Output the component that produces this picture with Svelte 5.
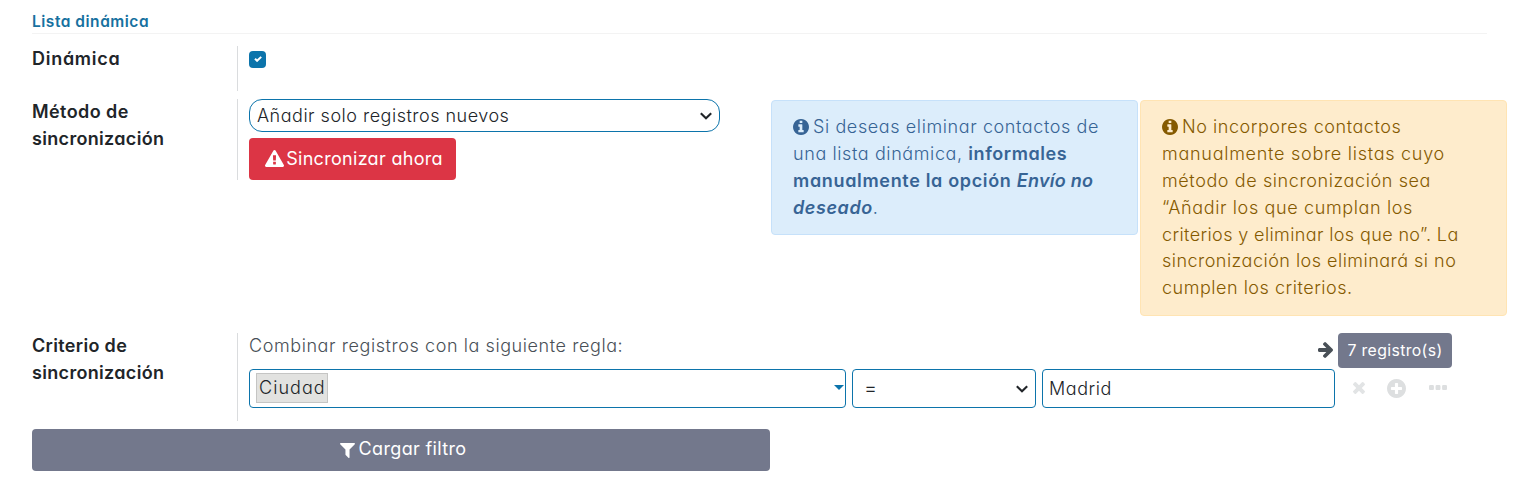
<script>
  const icons = {
    info: {
      box: '128 128 1536 1536',
      d: 'M1152 1376v-160q0-14-9-23t-23-9h-96v-512q0-14-9-23t-23-9h-320q-14 0-23 9t-9 23v160q0 14 9 23t23 9h96v320h-96q-14 0-23 9t-9 23v160q0 14 9 23t23 9h448q14 0 23-9t9-23zm-128-896v-160q0-14-9-23t-23-9h-192q-14 0-23 9t-9 23v160q0 14 9 23t23 9h192q14 0 23-9t9-23zM1664 896q0 209-103 385.5t-279.5 279.5-385.5 103-385.5-103-279.5-279.5-103-385.5 103-385.5 279.5-279.5 385.5-103 385.5 103 279.5 279.5 103 385.5z'
    },
    warning: {
      box: '0 0 1792 1664',
      d: 'M1024 1375v-190q0-14-9.500-23.500t-22.500-9.500h-192q-13 0-22.500 9.500t-9.500 23.500v190q0 14 9.500 23.500t22.500 9.500h192q13 0 22.500-9.500t9.500-23.500zm-2-374l18-459q0-12-10-19-13-11-24-11h-220q-11 0-24 11-10 7-10 21l17 457q0 10 10 16.500t24 6.500h185q14 0 23.500-6.500t10.500-16.500zm-14-934l768 1408q35 63-2 126-17 29-46.500 46t-63.500 17h-1536q-34 0-63.500-17t-46.500-46q-37-63-2-126l768-1408q17-31 47-49t65-18 65 18 47 49z'
    },
    filter: {
      box: '192 256 1408 1408',
      d: 'M1595 295q17 41-14 70l-493 493v742q0 42-39 59-13 5-25 5-27 0-45-19l-256-256q-19-19-19-45v-486l-493-493q-31-29-14-70 17-39 59-39h1280q42 0 59 39z'
    },
    arrow: {
      box: '128 180 1472 1560',
      d: 'M1600 960q0 54-37 91l-651 651q-39 37-91 37-51 0-90-37l-75-75q-38-38-38-91t38-91l293-293h-704q-52 0-84.500-37.500t-32.500-90.500v-128q0-53 32.500-90.500t84.500-37.500h704l-293-294q-38-36-38-90t38-90l75-75q38-38 90-38 53 0 91 38l651 651q37 35 37 90z'
    },
    times: {
      box: '302 366 1188 1188',
      d: 'M1490 1322q0 40-28 68l-136 136q-28 28-68 28t-68-28l-294-294-294 294q-28 28-68 28t-68-28l-136-136q-28-28-28-68t28-68l294-294-294-294q-28-28-28-68t28-68l136-136q28-28 68-28t68 28l294 294 294-294q28-28 68-28t68 28l136 136q28 28 28 68t-28 68l-294 294 294 294q28 28 28 68z'
    },
    plus: {
      box: '128 128 1536 1536',
      d: 'M1344 960v-128q0-26-19-45t-45-19h-256v-256q0-26-19-45t-45-19h-128q-26 0-45 19t-19 45v256h-256q-26 0-45 19t-19 45v128q0 26 19 45t45 19h256v256q0 26 19 45t45 19h128q26 0 45-19t19-45v-256h256q26 0 45-19t19-45zM1664 896q0 209-103 385.500t-279.500 279.500-385.500 103-385.500-103-279.500-279.500-103-385.500 103-385.500 279.500-279.500 385.500-103 385.500 103 279.500 279.500 103 385.500z'
    },
    dots: {
      box: '192 640 1408 384',
      d: 'M576 736v192q0 40-28 68t-68 28h-192q-40 0-68-28t-28-68v-192q0-40 28-68t68-28h192q40 0 68 28t28 68zm512 0v192q0 40-28 68t-68 28h-192q-40 0-68-28t-28-68v-192q0-40 28-68t68-28h192q40 0 68 28t28 68zm512 0v192q0 40-28 68t-68 28h-192q-40 0-68-28t-28-68v-192q0-40 28-68t68-28h192q40 0 68 28t28 68z'
    }
  };

  // Each line is a list of runs: text, letter spacing in px, style class.
  const syncNote = [
    [['Si deseas eliminar contactos de', 0.6, '']],
    [['una lista dinámica, ', 0.6, ''], ['informales', 0.55, 'strong']],
    [['manualmente la opción ', 0.67, 'strong'], ['Envío no', 0.25, 'strong em']],
    [['deseado', 0.6, 'strong em'], ['.', 0, '']]
  ];
  const manualNote = [
    [['No incorpores contactos', 0.55, '']],
    [['manualmente sobre listas cuyo', 0.73, '']],
    [['método de sincronización sea', 0.6, '']],
    [['“Añadir los que cumplan los', 0.63, '']],
    [['criterios y eliminar los que no”. La', 0.38, '']],
    [['sincronización los eliminará si no', 0.48, '']],
    [['cumplen los criterios.', 0.52, '']]
  ];
</script>

{#snippet icon(name)}
  <svg class="icon {name}" viewBox={icons[name].box} preserveAspectRatio="none" aria-hidden="true"><path fill="currentColor" fill-rule="evenodd" d={icons[name].d} /></svg>
{/snippet}

{#snippet chevron()}
  <svg class="chevron" viewBox="0 0 12 8" aria-hidden="true"><path d="M0.800 1.200 L6 6.200 L11.200 1.200" fill="none" stroke="#212529" stroke-width="2.100" /></svg>
{/snippet}

{#snippet run(text, spacing, cls = '')}<span class={cls} style:letter-spacing="{spacing}px">{text}</span>{/snippet}

{#snippet note(lines, kind)}
  <div class="note {kind}">
    {#each lines as line, i}
      <div class="line">{#if i === 0}{@render icon('info')}{/if}{#each line as [text, spacing, cls]}{@render run(text, spacing, cls)}{/each}</div>
    {/each}
  </div>
{/snippet}

<main>
  <h2>{@render run('Lista dinámica', 0.52)}</h2>

  <section class="row first">
    <div class="label">{@render run('Dinámica', 0.72)}</div>
    <div class="field">
      <div class="checkbox"><svg viewBox="0 0 8 6"><path d="M1 2.800 L3.100 4.800 L7.200 0.900" fill="none" stroke="#fff" stroke-width="2" /></svg></div>
    </div>
  </section>

  <section class="row second">
    <div class="label">{@render run('Método de', 0.42)}<br />{@render run('sincronización', 0.32)}</div>
    <div class="field method">
      <div class="select">{@render run('Añadir solo registros nuevos', 0.5)}{@render chevron()}</div>
      <button class="danger">{@render icon('warning')}{@render run('Sincronizar ahora', 0.3)}</button>
    </div>
    <div class="notes">
      {@render note(syncNote, 'blue')}
      {@render note(manualNote, 'yellow')}
    </div>
  </section>

  <section class="row third">
    <div class="label">{@render run('Criterio de', 0.33)}<br />{@render run('sincronización', 0.32)}</div>
    <div class="field criteria">
      <div class="summary">
        <div class="rule">{@render run('Combinar registros con la siguiente regla:', 0.58)}</div>
        {@render icon('arrow')}
        <button class="count">{@render run('7 registro(s)', 0.37)}</button>
      </div>
      <div class="condition">
        <div class="box model"><span class="chip">{@render run('Ciudad', 1.05)}</span><i class="caret"></i></div>
        <div class="box operator"><span class="equals">=</span>{@render chevron()}</div>
        <div class="box value">{@render run('Madrid', 0.55)}</div>
        <div class="actions">{@render icon('times')}{@render icon('plus')}{@render icon('dots')}</div>
      </div>
    </div>
  </section>

  <button class="load">{@render icon('filter')}{@render run('Cargar filtro', 0.35)}</button>
</main>

<style>
  :global(body) { background: #fff; }
  main {
    box-sizing: border-box;
    width: 1526px;
    height: 486px;
    padding: 8px 0 0 32px;
    overflow: hidden;
    font: 300 18px/26.9px Inter, sans-serif;
    font-feature-settings: 'cv11';
    color: #212529;
  }
  main :global(*) { box-sizing: border-box; }
  h2 {
    width: 1455px;
    height: 26px;
    margin: 0;
    border-bottom: 1px solid #f3f3f3;
    font-size: 15.5px;
    font-weight: 600;
    line-height: 27px;
    color: #17719f;
  }
  .row { display: flex; align-items: flex-start; }
  .label { width: 205px; flex: none; font-weight: 600; }
  .field { flex: none; border-left: 1px solid #dadcde; padding-left: 11px; }
  .first { margin-top: 12px; height: 45px; }
  .first .field { height: 45px; padding-top: 5px; }
  .second { margin-top: 8px; height: 217px; }
  .third { margin-top: 17px; height: 88px; }
  .checkbox {
    width: 17px;
    height: 17px;
    border-radius: 4px;
    background: #0c74ab;
    display: grid;
    place-items: center;
  }
  .checkbox svg { width: 8px; height: 6px; margin-bottom: 1px; }
  .method { width: 483px; height: 81px; }
  .select {
    display: flex;
    align-items: center;
    justify-content: space-between;
    width: 471px;
    height: 33px;
    padding: 1px 7px 0 7px;
    border: 1px solid #0c74ab;
    border-radius: 13px;
    background: #fff;
  }
  .select .chevron { margin-bottom: 1px; }
  .chevron { width: 12px; height: 8px; flex: none; }
  .icon { display: block; flex: none; }
  button {
    display: flex;
    align-items: center;
    justify-content: center;
    margin: 0;
    padding: 0;
    border: 0;
    border-radius: 4px;
    color: #fff;
    font: inherit;
    font-weight: 400;
    font-feature-settings: inherit;
  }
  .danger { width: 207px; height: 42px; margin-top: 6px; padding-left: 3px; background: #dc3545; gap: 2px; }
  .warning { width: 19px; height: 17px; margin-bottom: 1px; }
  .notes { display: flex; align-items: flex-start; gap: 2px; margin: 1px 0 0 51px; }
  .note {
    width: 367px;
    padding: 13px 21px 12px;
    border: 1px solid;
    border-radius: 4px;
    white-space: pre;
  }
  .blue { height: 135px; background: #dcedfb; border-color: #c6e1fa; color: #376495; }
  .yellow { height: 216px; background: #feeccc; border-color: #ffe4b3; color: #855a00; }
  .line { height: 26.900px; }
  .info { display: inline-block; width: 16px; height: 16px; margin-right: 4px; vertical-align: -2px; }
  .strong { font-weight: 600; }
  .em { font-style: italic; }
  .criteria { height: 88px; width: 1230px; }
  .summary { display: flex; height: 35px; }
  .rule { width: 1069px; color: #495057; }
  .arrow { width: 15px; height: 16px; margin-top: 9px; color: #495057; }
  .count { width: 114px; height: 35px; margin-left: 5px; padding-top: 1px; background: #73788c; font-size: 15.800px; }
  .condition { display: flex; margin-top: 1px; gap: 6px; }
  .box {
    display: flex;
    align-items: center;
    justify-content: space-between;
    height: 39px;
    border: 1px solid #0c74ab;
    border-radius: 4px;
    background: #fff;
  }
  .model { width: 597px; padding: 0 1px 2px 6px; }
  .chip {
    width: 72px;
    height: 30px;
    padding: 1px 0 0 2px;
    border: 1px solid #c5c5c4;
    background: #e2e2e0;
  }
  .caret { border: 5px solid transparent; border-top-color: #0c74ab; border-bottom: 0; }
  .operator { width: 184px; padding: 0 7px 0 11px; }
  .equals { font-size: 20px; }
  .value { width: 293px; padding: 2px 0 0 6px; }
  .actions { display: flex; align-items: center; height: 37px; margin-left: 12px; color: #dddfe0; }
  .times { width: 12px; height: 12px; color: #e2e4e5; }
  .plus { width: 19px; height: 19px; margin: 1px 0 0 22px; }
  .dots { width: 18px; height: 5px; margin-left: 23px; }
  .load { width: 738px; height: 42px; margin-top: 8px; padding: 0 0 2px 4px; background: #73788c; gap: 4px; }
  .filter { width: 15px; height: 15px; margin-top: 2px; }
</style>
